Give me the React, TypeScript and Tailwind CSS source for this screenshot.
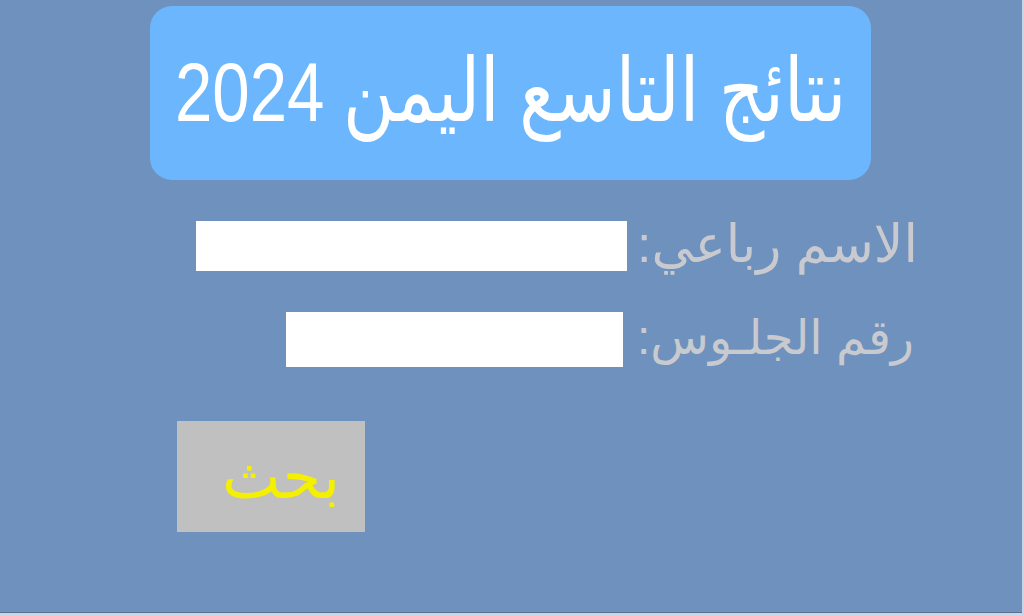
import React from 'react';

const App: React.FC = () => {
  return (
    <div className="w-[1024px] h-[616px] bg-[#6f91bd] overflow-hidden relative" style={{ fontFamily: '"Liberation Sans", "DejaVu Sans", sans-serif' }}>
      <div className="pt-[6px] pl-[150px]">
        <div className="w-[721px] h-[174px] rounded-[22px] bg-[#6bb6fd] flex items-center justify-center">
          <h1 dir="rtl" className="text-white text-[84px] leading-none whitespace-nowrap scale-x-[0.8] pb-[4px]">
            <span className="text-[88px]">نتائج التاسع اليمن</span> 2024
          </h1>
        </div>
      </div>

      <div className="mt-[41px] flex items-center pl-[196px]">
        <div className="w-[431px] h-[50px] bg-white" />
        <div dir="rtl" className="ml-[10px] text-[#c8cacf] text-[52px] leading-none whitespace-nowrap -mt-[4px]">الاسم رباعي:</div>
      </div>

      <div className="mt-[41px] flex items-center pl-[286px]">
        <div className="w-[337px] h-[55px] bg-white" />
        <div dir="rtl" className="ml-[14px] text-[#c8cacf] text-[48px] leading-none whitespace-nowrap -mt-[4px]">رقم الجلـوس:</div>
      </div>

      <div className="mt-[54px] pl-[177px]">
        <button className="w-[188px] h-[111px] bg-[#c0c0c0] flex items-center justify-center pl-[20px] text-[#f4f000] text-[62px] leading-none">
          بحث
        </button>
      </div>

      <div className="absolute left-0 right-0 bottom-[3px] h-[1px] bg-[#5a6f8e]" />
      <div className="absolute left-0 right-0 bottom-0 h-[3px] bg-[#c9d6e6]" />
      <div className="absolute top-0 bottom-0 right-0 w-[2px] bg-[#c9d6e6]" />
    </div>
  );
};

export default App;
